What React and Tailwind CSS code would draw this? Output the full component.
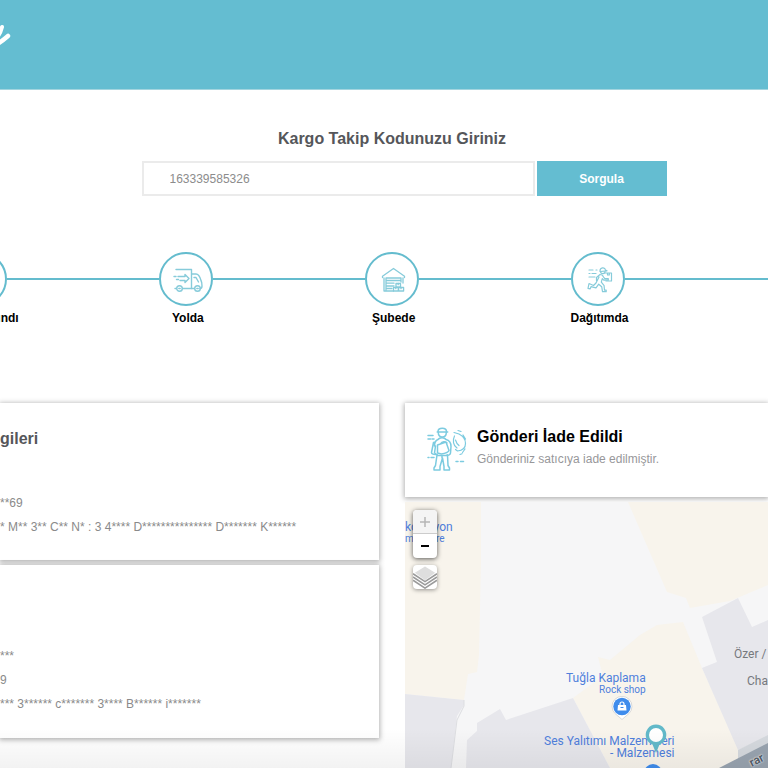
import React from 'react';

const stroke = {
  fill: 'none',
  stroke: 'currentColor',
  strokeLinecap: 'round',
  strokeLinejoin: 'round',
};

function TruckIcon() {
  return (
    <svg viewBox="0 0 30 26" className="h-[26px] w-[30px] text-[#86cbda]" {...stroke} strokeWidth="1.4" aria-hidden="true">
      <path d="M3 2.500H18.500V21.500M18.500 7h4.500c2.500 0 4 3 5 6.500c1 1.500 1 3 1 5.500c0 1.800-.8 2.500-2 2.500" />
      <path d="M21 10.500h2l2.500 4.500M1 9.500h2M5 9.500h7V7.500l4 4-4 4v-1.800M3.500 12.500h2M7 13.500h5" />
      <circle cx="6.500" cy="21.500" r="2.800" />
      <circle cx="24.500" cy="21.500" r="2.800" />
      <path d="M9.500 21.500h12M2 21.500h1.500M5.800 21.500h1.400M23.800 21.500h1.400" />
    </svg>
  );
}

function WarehouseIcon() {
  return (
    <svg viewBox="0 0 26 26" className="h-[26px] w-[26px] text-[#86cbda]" {...stroke} strokeWidth="1.300" aria-hidden="true">
      <path d="M1.500 10.500V9.200L12.500 1.500 23.500 9.200v1.300M3 11v13h9.500M22 11v5" />
      <path d="M5 23.500V11h15v4M5 13.500h15M5 16.200h8M5 19h8M5 21.500h6" />
      <path d="M15 16.500h4.500V20H15zM12.500 20.500h4.800V24h-4.800zM17.600 20.500h5V24h-5z" />
      <path d="M17.200 16.500v1.200M14.800 20.500v1.200M20 20.500v1.200" />
    </svg>
  );
}

function RunnerIcon() {
  return (
    <svg viewBox="0 0 26 26" className="h-[26px] w-[26px] text-[#86cbda]" {...stroke} strokeWidth="1.200" aria-hidden="true">
      <path d="M2 3h4M9 3h1M2 6.500h1M5 6.500h4M2 10h6" />
      <path d="M13 4.500c-.3-4.500 5-4.500 5.500-1.500l1.500.8-6.500.7c.3 3 4.500 3 4.800-.5" />
      <path d="M17.500 6H24.500v8h-5.500M20.500 6v2h1.800v-2" />
      <path d="M13 7.500L9.500 10.500v3M13 7.500c2 0 3 .8 3.500 2.500l1.300 1.700h3.500v1.500h-4.500l-1.500-1.500-1 3.500 2.800 3.500.4 4.500h1.700v1.500h-3.700l-.8-5-3-2.500-2.700 3.700-5-1.200-.8 2.200-2.200-.6 1-4.800 4.500 2 2.500-2.500L12 10" />
    </svg>
  );
}

function CourierIcon() {
  return (
    <svg viewBox="0 0 40 44" className="h-11 w-10 shrink-0 text-[#7ccbe0]" {...stroke} strokeWidth="1.500" aria-hidden="true">
      <path d="M11 4.500c0-4.500 8.500-4.500 8.500 0M10.200 5h10.500M11.300 5.500c-.3 6 8 6 8 0" />
      <path d="M11 12.500c1.500-2.500 6.500-2.500 8 0c4 1 5 3.500 5 7l-.5 6.500c-.5 2-2 2.500-3.500 2M11 12.500C8 13.500 7.500 16 7.500 19M6.500 15.500L4.500 25.500c0 1.500 2 2 4.500 2M6.500 15.500l2-.5" />
      <path d="M10.500 18l8.500-3 3 8.500c-1 2.500-4 3-7.500 3.500l-4-1zM13.500 17c1.500-2.500 5-3 6.500-1M8.500 19l-1 7 3 2" />
      <path d="M10 28L8.500 38.500l-1.500 2.500v2h6v-3.500l2.500-8.500 1.500 8.500v3.500h5.500v-2l-1.500-2.500-.5-10.500M10 28.500h10M15 29v2" />
      <path d="M1 8.500h5M1 12h2.500M5 12h2M1 30.500h1M4 30.500h3M29 34.500h2M33.500 34.500h3" />
      <path d="M27 5.500l5 1.500c4 2 6.500 5 6.500 9.500s-3 7-8 7.500l-2-1.500M31 3.500l3 1M36 8l2.500 4M38 22l-2.500 3.500M33 27.500l2-.8" strokeWidth="1.200" />
      <path d="M27.500 9c-2 4-1.500 9.500 2.500 12M28.500 13l1.500 3.500 2 2" strokeWidth="1.200" />
    </svg>
  );
}

function LayersIcon() {
  return (
    <svg viewBox="0 0 26 26" className="h-6 w-6" aria-hidden="true">
      <path d="M13 1.500L2 8.500l11 8 11-8z" fill="#dedede" />
      <path d="M0 9.500l13 8.500 13-8.500M0 13l13 8.500L26 13M0 16.500L13 25l13-8.500" fill="none" stroke="#9b9b9b" strokeWidth="1.800" />
    </svg>
  );
}

function Step({ label, children }) {
  return (
    <li className="flex flex-col items-center">
      <div className="flex w-full items-center">
        <span className="h-[2px] flex-1 bg-[#64bcce]" />
        <span className="flex size-[54px] items-center justify-center rounded-full border-2 border-[#64bcce] pt-px pl-1">
          {children}
        </span>
        <span className="h-[2px] flex-1 bg-[#64bcce]" />
      </div>
      <span className="pl-1 text-xs leading-6 font-bold whitespace-nowrap text-black">{label}</span>
    </li>
  );
}

function MapGround() {
  return (
    <svg viewBox="0 0 363 266" preserveAspectRatio="xMinYMin slice" className="absolute inset-0 h-full w-full" aria-hidden="true">
      <rect width="363" height="266" fill="#f6f6f7" />
      <path d="M0 0H76V60L74 153 72 170 63 172 59 198 0 192z" fill="#f8f4ec" />
      <path d="M223 0L262 90 281 96 285 106 325 99 363 83V0z" fill="#f8f4ec" />
      <path d="M193 155L205 158 235 133 252 123 278 120 297 166 333 246V258L318 266H205L168 196 198 174z" fill="#f8f4ec" />
      <path d="M0 192L59 198V203L52 214 46 266H0z" fill="#e7e7ec" />
      <path d="M59 198V204L52 218 46 266" fill="none" stroke="#dcdde1" strokeWidth="1" />
      <path d="M61 266L62 238 72 229V221L95 207 101 218 168 196 205 266z" fill="#e7e7ec" />
      <path d="M297 115L333 96 347 125 363 118V235L333 248 297 166 312 160z" fill="#e7e7ec" />
      <path d="M333 248L363 233V242L318 266H322L333 258z" fill="#d5d9de" />
      <path d="M314 266L363 241V266z" fill="#99a4b0" />
    </svg>
  );
}

export default function App() {
  return (
    <div className="relative min-h-screen overflow-hidden bg-white font-['Liberation_Sans',Arial,sans-serif]">
      <header className="h-[90px] border-b border-[#a3d5df] bg-[#64bdd1]">
        <svg viewBox="0 0 12 90" className="h-[90px] w-3" fill="none" stroke="#fff" strokeLinecap="round" aria-hidden="true">
          <path d="M-4 38Q0 35 2 27" strokeWidth="4" />
          <path d="M-4 45Q1 42 8 36" strokeWidth="4.500" />
        </svg>
      </header>

      <main>
        <form className="pt-10" onSubmit={(e) => e.preventDefault()}>
          <label htmlFor="code" className="block pl-4 text-center text-base leading-[18px] font-bold text-[#55565a]">
            Kargo Takip Kodunuzu Giriniz
          </label>
          <div className="flex justify-center gap-[2px] pt-[13px] pl-10">
            <input
              id="code"
              type="text"
              defaultValue="163339585326"
              className="h-[35px] w-[393px] border-2 border-[#ebebeb] bg-white px-[26px] text-xs text-[#8c8c8c] outline-none"
            />
            <button type="submit" className="h-[35px] w-[130px] bg-[#64bdd1] text-xs font-bold text-white">
              Sorgula
            </button>
          </div>
        </form>

        <ol className="-ml-[16%] grid w-[134%] grid-cols-5 pt-14">
          <Step label="Teslim Alındı" />
          <Step label="Yolda"><TruckIcon /></Step>
          <Step label="Şubede"><WarehouseIcon /></Step>
          <Step label="Dağıtımda"><RunnerIcon /></Step>
          <li className="flex h-[54px] items-center">
            <span className="h-[2px] w-full bg-[#64bcce]" />
          </li>
        </ol>

        <div className="grid grid-cols-[379fr_363fr] gap-[26px] pt-[73px]">
          <div className="flex flex-col gap-[5px] text-xs leading-6 whitespace-nowrap text-[#8a8a8a]">
            <section className="h-[157px] bg-white pt-6 shadow-[0_1px_5px_1px_rgba(0,0,0,0.3)]">
              <h2 className="text-base leading-6 font-bold text-[#55565a]">gileri</h2>
              <p className="pt-10">**69</p>
              <p>* M** 3** C** N* : 3 4**** D*************** D******* K******</p>
            </section>
            <section className="h-[173px] bg-white pt-[79px] shadow-[0_1px_5px_1px_rgba(0,0,0,0.3)]">
              <p>***</p>
              <p>9</p>
              <p>*** 3****** c******* 3**** B****** i*******</p>
            </section>
          </div>

          <div className="flex flex-col gap-[5px]">
            <section className="flex h-[94px] gap-[10px] bg-white pt-6 pl-[22px] shadow-[0_1px_5px_1px_rgba(0,0,0,0.3)]">
              <CourierIcon />
              <div className="whitespace-nowrap">
                <h2 className="text-base leading-5 font-bold text-black">Gönderi İade Edildi</h2>
                <p className="text-xs leading-6 text-[#97979a]">Gönderiniz satıcıya iade edilmiştir.</p>
              </div>
            </section>

            <section aria-label="Harita" className="relative h-[266px] overflow-hidden whitespace-nowrap font-[Roboto,sans-serif] text-xs text-[#4f7fdc]">
              <MapGround />
              <div className="absolute top-[19px] left-0 leading-[13px]">
                <p>kolasyon</p>
                <p className="text-[10px] leading-[10px]">ment ore</p>
              </div>
              <div className="absolute top-[169px] left-[161px] text-right leading-[14px]">
                <p>Tuğla Kaplama</p>
                <p className="text-[10px] leading-[10px]">Rock shop</p>
              </div>
              <svg viewBox="0 0 22 24" className="absolute top-[194px] left-[206px] h-6 w-[22px]" aria-hidden="true">
                <path d="M11 23.500L4 17.500A10 10 0 1 1 18 17.500z" fill="#fff" stroke="#d0d0d0" strokeWidth=".8" />
                <circle cx="11" cy="10.500" r="8.700" fill="#3f8cec" />
                <path d="M7 9h8l.5 5.500h-9z" fill="#fff" />
                <path d="M9 9V8a2 2 0 0 1 4 0v1" fill="none" stroke="#fff" strokeWidth="1.200" />
                <path d="M9.500 11.500h3" stroke="#3f8cec" />
              </svg>
              <div className="absolute top-[233px] left-[139px] text-right leading-3">
                <p>Ses Yalıtımı Malzemeleri</p>
                <p>- Malzemesi</p>
              </div>
              <svg viewBox="0 0 20 20" className="absolute top-[261px] left-[238px] size-5" aria-hidden="true">
                <circle cx="10" cy="10" r="9" fill="#3f8cec" />
              </svg>
              <svg viewBox="0 0 22 30" className="absolute top-[222px] left-[240px] h-[30px] w-[22px]" aria-hidden="true">
                <path d="M11 29L7.500 20.500A10.300 10.300 0 1 1 14.500 20.500z" fill="#62b9c9" />
                <circle cx="11" cy="11" r="7" fill="#fff" />
              </svg>
              <p className="absolute top-[145px] left-[329px] leading-[14px] text-[#76797d]">Özer /</p>
              <p className="absolute top-[172px] left-[342px] leading-[14px] text-[#76797d]">Cha</p>
              <p className="absolute top-[251px] left-[344px] -rotate-[27deg] leading-[14px] font-bold text-[#56616c] [text-shadow:0_0_1px_white,0_0_2px_white]">rar</p>
              <div className="absolute top-2 left-2 flex flex-col rounded bg-white text-center shadow-[0_1px_5px_rgba(0,0,0,0.65)]">
                <button type="button" aria-label="Yakınlaştır" disabled className="flex size-6 items-center justify-center rounded-t border-b border-[#ccc] bg-[#f4f4f4] text-[#b5b5b5]">
                  <svg viewBox="0 0 10 10" className="size-[10px]" aria-hidden="true"><path d="M5 0v10M0 5h10" stroke="currentColor" strokeWidth="1.500" /></svg>
                </button>
                <button type="button" aria-label="Uzaklaştır" className="flex size-6 items-center justify-center rounded-b text-black">
                  <svg viewBox="0 0 8 2" className="h-[2px] w-2" aria-hidden="true"><path d="M0 1h8" stroke="currentColor" strokeWidth="2" /></svg>
                </button>
              </div>
              <button type="button" aria-label="Katmanlar" className="absolute top-[63px] left-2 size-6 rounded bg-white shadow-[0_1px_4px_rgba(0,0,0,0.4)]">
                <LayersIcon />
              </button>
            </section>
          </div>
        </div>
      </main>
      <div className="pointer-events-none absolute inset-x-0 bottom-0 h-10 bg-linear-to-b from-transparent to-black/5" />
    </div>
  );
}
